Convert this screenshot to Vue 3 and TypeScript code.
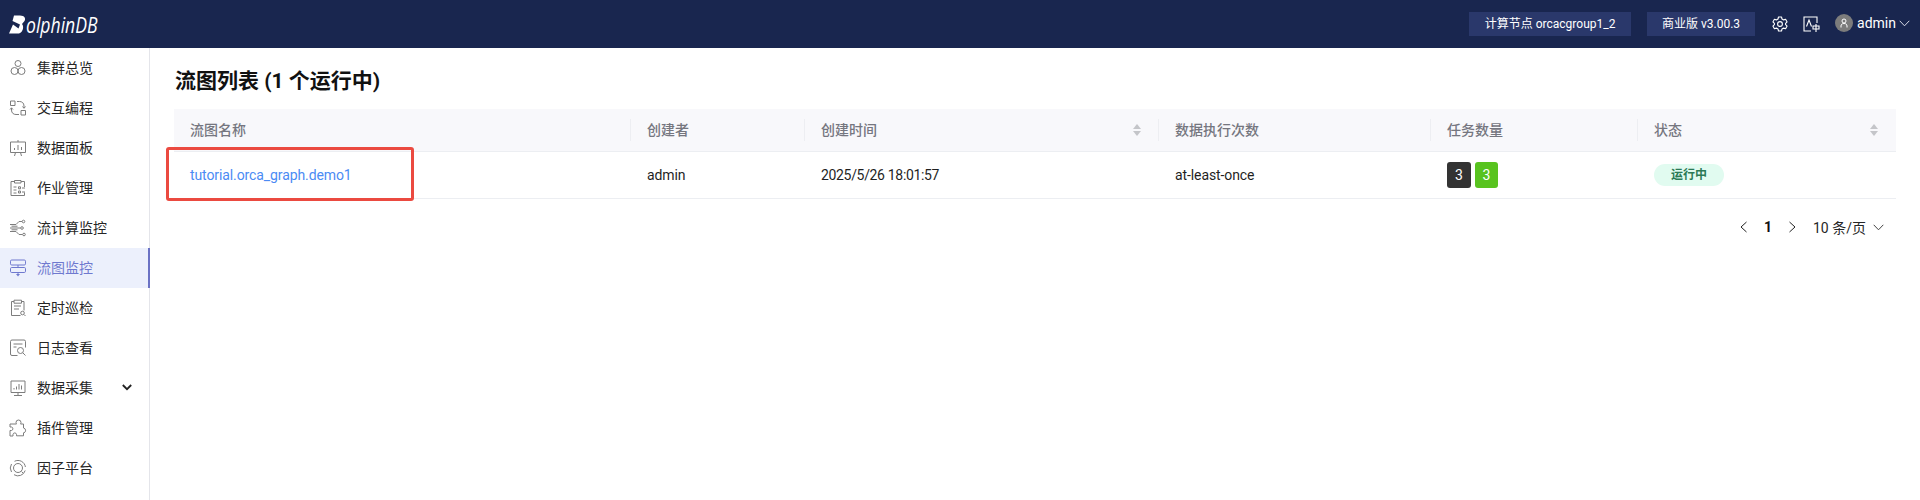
<script setup lang="ts">
interface NavItem { label: string; icon: string; active?: boolean; arrow?: boolean }
const nav: NavItem[] = [
  { label: '集群总览', icon: 'cluster' },
  { label: '交互编程', icon: 'code' },
  { label: '数据面板', icon: 'board' },
  { label: '作业管理', icon: 'job' },
  { label: '流计算监控', icon: 'stream' },
  { label: '流图监控', icon: 'graph', active: true },
  { label: '定时巡检', icon: 'inspect' },
  { label: '日志查看', icon: 'log' },
  { label: '数据采集', icon: 'collect', arrow: true },
  { label: '插件管理', icon: 'plugin' },
  { label: '因子平台', icon: 'factor' },
]
</script>

<template>
  <div class="page">
    <header class="topbar">
      <div class="logo">
        <svg class="logo-d" width="17" height="19" viewBox="0 0 17 19"><path d="M5 0.500 H11 C15.500 0.500 17 3.500 15.500 6 L13 9 C15 11 14.500 17 10 18.500 H0 L4 9.500 L9.500 13.500 L11 9.500 L3.500 6 Z" fill="#fff"/></svg>
        <span class="logo-text">olphinDB</span>
      </div>
      <div class="top-right">
        <span class="chip chip-node">计算节点 orcacgroup1_2</span>
        <span class="chip chip-ver">商业版 v3.00.3</span>
        <svg class="t-gear" width="16" height="16" viewBox="0 0 16 16" fill="none" stroke="#fff" stroke-width="1.100" stroke-linejoin="round">
          <path d="M6.500 1h3l.5 2 1.600.9 2-.6 1.500 2.600-1.500 1.400v1.400l1.500 1.400-1.500 2.600-2-.6-1.600.9-.5 2h-3l-.5-2-1.600-.9-2 .6L.9 10.100l1.500-1.400V7.300L.9 5.900l1.500-2.600 2 .6L6 3z"/>
          <circle cx="8" cy="8" r="2.400"/>
        </svg>
        <svg class="t-lang" width="17" height="16" viewBox="0 0 17 16" fill="none" stroke="#fff" stroke-width="1.100">
          <path d="M14 7V1H1v14h7"/>
          <path d="M3.500 10.500 6 4l2.500 6.500"/>
          <path d="M10 10h6v3h-6zM13 8v8"/>
        </svg>
        <span class="avatar">
          <svg width="10" height="10" viewBox="0 0 10 10" fill="none" stroke="#fff" stroke-width="1"><circle cx="5" cy="3" r="2"/><path d="M2 9.500V8c0-1.500 1-2.500 3-2.500S8 6.500 8 8v1.500"/></svg>
        </span>
        <span class="user">admin</span>
        <svg class="t-arrow" width="11" height="7" viewBox="0 0 11 7" fill="none" stroke="#d8dbe6" stroke-width="1"><path d="M.7.800 5.500 5.800 10.300.800"/></svg>
      </div>
    </header>

    <div class="body">
      <aside class="side">
        <div v-for="item in nav" :key="item.label" class="nav-item" :class="{ active: item.active }">
          <svg class="nav-icon" width="18" height="18" viewBox="0 0 18 18" fill="none" stroke="currentColor" stroke-width="1">
            <template v-if="item.icon === 'cluster'">
              <circle cx="9" cy="4.500" r="3"/><circle cx="5.500" cy="12" r="3.500"/><circle cx="12.500" cy="12" r="3.500"/>
            </template>
            <template v-else-if="item.icon === 'code'">
              <path d="M1.500 2h4.500v4.500H1.500zM12 11.500h4.500V16H12z"/>
              <path d="M8 2.500h2.500c2.500 0 4.500 1.500 4.500 4.500v2M13.500 7.500l1.500 1.800 1.500-1.800M10 15.500H7c-2.500 0-4.500-1.500-4.500-4.500V9M1 10.500 2.500 8.800 4 10.500"/>
            </template>
            <template v-else-if="item.icon === 'board'">
              <path d="M1.500 3h15v10.500h-15zM9 1v2M6.500 13.500 5.500 17M11.500 13.500l1 3.500"/>
              <path d="M5.500 9v2M9 6v5M12.500 8v3"/>
            </template>
            <template v-else-if="item.icon === 'job'">
              <path d="M5.500 2.500H2v14h13.500v-3M15.500 8V2.500H12M5.500 1.500h6.500v2.500H5.500z"/>
              <path d="M4.500 8h3M4.500 11h3M4.500 14h3M9.500 7.800h2v2h-2zM9.500 12h2v2h-2zM13 9h3M13 13h3"/>
            </template>
            <template v-else-if="item.icon === 'stream'">
              <path d="M1 5.500h6l3-3h3M1 9h10.500M1 12.500h6l3 3h3.500M2.500 7.200h6M2.500 10.800h6"/>
              <circle cx="14.500" cy="2.500" r="1.300"/><circle cx="13" cy="9" r="1.300"/><circle cx="15" cy="15.500" r="1.300"/>
            </template>
            <template v-else-if="item.icon === 'graph'">
              <rect x="1.500" y="1" width="15" height="5" rx="1.200"/><rect x="1.500" y="8.500" width="15" height="5" rx="1.200"/>
              <path d="M9 6v2.500M9 13.500v2"/><path d="M7 15h4l-2 2.500z" fill="currentColor" stroke="none"/>
            </template>
            <template v-else-if="item.icon === 'inspect'">
              <path d="M5 2.500H2.500v14h9M12.500 2.500H15v9M5 1.200h7.500v3H5z"/>
              <path d="M5 7h7M5 10h5"/><circle cx="13.500" cy="14" r="1.800"/><path d="m15 15.500 1.500 1.500"/>
            </template>
            <template v-else-if="item.icon === 'log'">
              <path d="M8.500 16.500H3a1.500 1.500 0 0 1-1.500-1.500V2.500A1.500 1.500 0 0 1 3 1h12a1.500 1.500 0 0 1 1.500 1.500v6"/>
              <path d="M4.500 5h9M4.500 8h3"/><circle cx="11.500" cy="11.500" r="3"/><path d="m13.800 13.800 2.700 2.700"/>
            </template>
            <template v-else-if="item.icon === 'collect'">
              <path d="M2 2h14v11.500H2zM5 16.500h8M9 13.500v3"/>
              <path d="M5 10.500V9M7.500 10.500V7.500M10 10.500V5M12.500 10.500V6.500"/>
            </template>
            <template v-else-if="item.icon === 'plugin'">
              <path d="M7 3.500a2.500 2.500 0 0 1 5 0c0 .5-.300 1-.5 1.500h3v4a2.500 2.500 0 0 1 .5 4.800h-.5v3H7.500v-1.500a1.800 1.800 0 0 0-3.500 0V17H1v-5.500h1.500a1.800 1.800 0 0 0 0-3.500H1V5h6.500C7.300 4.500 7 4 7 3.500z"/>
            </template>
            <template v-else>
              <path d="M5.500 2.300A7.500 7.500 0 0 1 16.400 8M16.200 11.500A7.500 7.500 0 0 1 5 15.700M2.500 13A7.500 7.500 0 0 1 2.500 5"/>
              <circle cx="9" cy="9" r="4.500"/>
              <path d="m12.500 12.500 1.500 1.500"/>
            </template>
          </svg>
          <span class="nav-label">{{ item.label }}</span>
          <svg v-if="item.arrow" class="nav-arrow" width="10" height="7" viewBox="0 0 10 7" fill="none" stroke="#222" stroke-width="1.800"><path d="M.8 1 5 5.200 9.200 1"/></svg>
        </div>
      </aside>

      <main class="main">
        <h1 class="title">流图列表 (1 个运行中)</h1>
        <div class="table-wrap">
          <table class="table">
            <colgroup>
              <col class="c1" /><col class="c2" /><col class="c3" />
              <col class="c4" /><col class="c5" /><col />
            </colgroup>
            <thead>
              <tr>
                <th>流图名称</th>
                <th>创建者</th>
                <th>
                  <div class="th-sort">创建时间<span class="sort"><i class="up"></i><i class="down"></i></span></div>
                </th>
                <th>数据执行次数</th>
                <th>任务数量</th>
                <th>
                  <div class="th-sort">状态<span class="sort"><i class="up"></i><i class="down"></i></span></div>
                </th>
              </tr>
            </thead>
            <tbody>
              <tr>
                <td><a class="link">tutorial.orca_graph.demo1</a></td>
                <td>admin</td>
                <td class="date">2025/5/26 18:01:57</td>
                <td>at-least-once</td>
                <td><span class="count dark">3</span><span class="count green">3</span></td>
                <td><span class="status">运行中</span></td>
              </tr>
            </tbody>
          </table>
          <div class="annot"></div>
        </div>
        <div class="pager">
          <svg width="9" height="12" viewBox="0 0 9 12" fill="none" stroke="#222" stroke-width="1"><path d="M7.500 1 2 6l5.500 5"/></svg>
          <span class="page-num">1</span>
          <svg width="9" height="12" viewBox="0 0 9 12" fill="none" stroke="#222" stroke-width="1"><path d="M1.500 1 7 6l-5.500 5"/></svg>
          <span class="page-size">10 条/页</span>
          <svg width="11" height="7" viewBox="0 0 11 7" fill="none" stroke="#444" stroke-width="1"><path d="M.7.800 5.500 5.800 10.300.800"/></svg>
        </div>
      </main>
    </div>
  </div>
</template>

<style>
html, body { margin: 0; background: #fff; }
</style>

<style scoped>
.page {
  width: 1920px;
  height: 500px;
  overflow: hidden;
  display: flex;
  flex-direction: column;
  font-family: Roboto, "Noto Sans CJK SC", sans-serif;
  font-size: 14px;
  color: #1f1f1f;
}
.topbar {
  height: 48px;
  flex: none;
  background: #19264f;
  display: flex;
  align-items: center;
  justify-content: space-between;
  padding: 0 10px 0 9px;
}
.logo { display: flex; align-items: center; color: #fff; height: 48px; }
.logo-d { flex: none; }
.logo-text {
  display: inline-block;
  width: 75px;
  font: italic 400 22px/1 "Open Sans", sans-serif;
  transform: scaleX(0.8);
  transform-origin: left center;
  white-space: nowrap;
}
.top-right { display: flex; align-items: center; color: #fff; }
.chip {
  height: 24px;
  line-height: 24px;
  background: #2a386b;
  font-size: 12px;
  text-align: center;
  color: #fff;
}
.chip-node { width: 162px; }
.chip-ver { width: 108px; margin-left: 16px; }
.t-gear { margin-left: 17px; }
.t-lang { margin-left: 15px; }
.avatar {
  width: 18px;
  height: 18px;
  margin-left: 15px;
  margin-top: -2px;
  border-radius: 50%;
  background: #7c7c7c;
  display: flex;
  align-items: center;
  justify-content: center;
}
.user { margin-left: 4px; font-size: 14px; margin-top: -2px; }
.t-arrow { margin-left: 3px; margin-top: -2px; }

.body { flex: 1; display: flex; min-height: 0; }
.side { width: 150px; flex: none; border-right: 1px solid #e4e5ea; box-sizing: border-box; }
.nav-item {
  height: 40px;
  display: flex;
  align-items: center;
  padding-left: 9px;
  box-sizing: border-box;
  color: #262626;
  position: relative;
}
.nav-icon { color: #7d7d7d; flex: none; }
.nav-label { margin-left: 10px; font-size: 14px; padding-bottom: 3px; }
.nav-arrow { position: absolute; left: 122px; top: 16px; }
.nav-item.active { background: #ecf0fc; border-right: 2px solid #6b72c4; margin-right: -1px; }
.nav-item.active .nav-label { color: #6f79cf; }
.nav-item.active .nav-icon { color: #6f79cf; }

.main { flex: 1; min-width: 0; padding: 0 24px 0 25px; }
.title { margin: 19px 0 14px; font-size: 21px; line-height: 28px; font-weight: 700; color: #111; }
.table-wrap { position: relative; margin-left: -1px; }
.table { width: 100%; border-collapse: separate; border-spacing: 0; table-layout: fixed; }
.c1 { width: 456px; }
.c2 { width: 174px; }
.c3 { width: 354px; }
.c4 { width: 272px; }
.c5 { width: 207px; }
th {
  height: 43px;
  box-sizing: border-box;
  background: #f8f8fb;
  border-bottom: 1px solid #eceef2;
  padding: 0 16px 2px 17px;
  font-size: 14px;
  font-weight: 500;
  text-align: left;
  color: #75767f;
  position: relative;
}
th:first-child, td:first-child { padding-left: 16px; }
th + th::before {
  content: "";
  position: absolute;
  left: 0;
  top: 10px;
  height: 22px;
  width: 1px;
  background: #edeef2;
}
td {
  height: 47px;
  box-sizing: border-box;
  border-bottom: 1px solid #eceef2;
  padding: 0 16px 0 17px;
  font-size: 14px;
  color: #1f1f1f;
  letter-spacing: -0.1px;
}
td.date { letter-spacing: -0.33px; }
.th-sort { display: flex; justify-content: space-between; align-items: center; }
.sort { display: flex; flex-direction: column; gap: 2px; margin-right: 1px; margin-top: 2px; }
th:last-child .sort { margin-right: 2px; }
.sort i { width: 0; height: 0; border-left: 4px solid transparent; border-right: 4px solid transparent; display: block; }
.sort .up { border-bottom: 5px solid #c4c5c9; }
.sort .down { border-top: 5px solid #c4c5c9; }
.link { color: #4b8bf4; }
.count {
  display: inline-block;
  height: 26px;
  line-height: 26px;
  text-align: center;
  border-radius: 3px;
  color: #fff;
  font-size: 14px;
  vertical-align: middle;
}
.count.dark { width: 24px; background: #333; }
.count.green { width: 23px; background: #58c31f; margin-left: 4px; }
.status {
  display: inline-block;
  width: 70px;
  height: 22px;
  line-height: 22px;
  text-align: center;
  border-radius: 11px;
  background: #e1fbf0;
  color: #2c7a56;
  font-size: 12px;
  font-weight: 600;
  vertical-align: middle;
  letter-spacing: 0;
}
.annot {
  position: absolute;
  left: -8px;
  top: 38px;
  width: 242px;
  height: 48px;
  border: 3px solid #eb4a40;
  border-radius: 3px;
  pointer-events: none;
}
.pager { display: flex; align-items: center; justify-content: flex-end; margin-top: 16px; padding-right: 12px; height: 24px; color: #262626; }
.page-num { margin: 0 16px; font-weight: 700; color: #111; font-size: 14px; }
.page-size { margin: 0 7px 0 16px; font-size: 14px; }
</style>
